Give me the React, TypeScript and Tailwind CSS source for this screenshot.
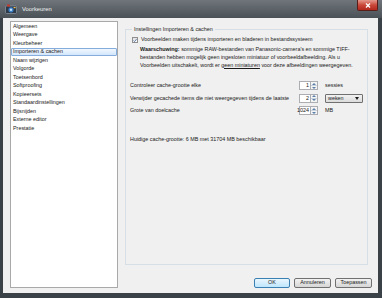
import * as React from "react"

const items = [
  "Algemeen",
  "Weergave",
  "Kleurbeheer",
  "Importeren & cachen",
  "Naam wijzigen",
  "Volgorde",
  "Toetsenbord",
  "Softproofing",
  "Kopieersets",
  "Standaardinstellingen",
  "Bijsnijden",
  "Externe editor",
  "Prestatie",
]

function Spin({ value }: { value: string }) {
  return (
    <div className="flex h-[9px] w-[19px]">
      <div className="flex w-[12px] items-center justify-end border border-[#abadb3] bg-white pr-[1px] leading-none">
        {value}
      </div>
      <div className="flex w-[7px] flex-col border border-l-0 border-[#abadb3] bg-[#f4f4f4]">
        <div className="flex flex-1 items-center justify-center border-b border-[#c9d3dd]">
          <svg width="4" height="2" viewBox="0 0 4 2">
            <path d="M0 2 L2 0 L4 2 Z" fill="#5b7fa8" />
          </svg>
        </div>
        <div className="flex flex-1 items-center justify-center">
          <svg width="4" height="2" viewBox="0 0 4 2">
            <path d="M0 0 L2 2 L4 0 Z" fill="#5b7fa8" />
          </svg>
        </div>
      </div>
    </div>
  )
}

function Btn({ label, primary }: { label: string; primary?: boolean }) {
  return (
    <div
      className={
        primary
          ? "flex h-[10px] w-[36px] items-center justify-center rounded-[2px] border border-[#3c7fb1] bg-linear-to-b from-[#eaf6fd] to-[#bee6fd] leading-none"
          : "flex h-[10px] w-[37px] items-center justify-center rounded-[2px] border border-[#707070] bg-linear-to-b from-[#f2f2f2] to-[#d6d6d6] leading-none"
      }
    >
      {label}
    </div>
  )
}

export default function App() {
  return (
    <div className="flex h-[298px] w-[382px] flex-col bg-[#3a4147] font-['Liberation_Sans',Arial,sans-serif] text-[5.4px] text-[#1a1a1a]">
      {/* title bar */}
      <div className="flex h-[18px] items-center bg-linear-to-b from-[#6f757b] to-[#4a5157] pl-[5px] pr-[4px]">
        <svg width="12" height="10" viewBox="0 0 12 10">
          <rect x="0.5" y="2" width="11" height="7.5" rx="1" fill="#2d3a4a" stroke="#9aa4ae" strokeWidth="0.6" />
          <rect x="2" y="0.5" width="3" height="2" fill="#c43b2c" />
          <circle cx="6" cy="5.8" r="2.6" fill="#3e7fc4" />
          <circle cx="6" cy="5.8" r="1.2" fill="#bfe0ff" />
          <rect x="8.6" y="3" width="2" height="1.2" fill="#f2c14e" />
        </svg>
        <span className="ml-[5px] text-[5.8px] text-[#f2f2f2]">Voorkeuren</span>
        <div className="ml-auto flex h-[11px] w-[21px] self-start items-center justify-center rounded-b-[2px] border border-t-0 border-[#5a1e1a] bg-linear-to-b from-[#e2988c] via-[#c9473a] to-[#b3261a]">
          <svg width="6" height="5" viewBox="0 0 6 5">
            <path d="M1 0.5 L5 4.5 M5 0.5 L1 4.5" stroke="#fff" strokeWidth="1.3" />
          </svg>
        </div>
      </div>

      {/* body */}
      <div className="mb-[5px] ml-[3px] mr-[4px] flex flex-1 bg-[#f0f0f0]">
        {/* category list */}
        <div className="ml-[7px] mt-[3px] flex h-[267px] w-[110px] flex-col border border-[#a9a9a9] bg-white">
          {items.map((item) => (
            <div
              key={item}
              className={
                item === "Importeren & cachen"
                  ? "flex h-[8.5px] items-center rounded-[1px] border border-[#84acdd] bg-linear-to-b from-[#f1f7fe] to-[#d3e6fb] pl-[1px] leading-none"
                  : "flex h-[8.5px] items-center pl-[2px] leading-none"
              }
            >
              {item}
            </div>
          ))}
        </div>

        {/* settings */}
        <div className="flex flex-1 flex-col pl-[7px] pr-[10px]">
          <fieldset className="mt-[7px] flex h-[240px] flex-col border border-[#d5dfe5] pl-[4px] pr-[4px]">
            <legend className="ml-[2px] px-[2px] leading-[8px]">Instellingen Importeren &amp; cachen</legend>

            <div className="mt-[4px] flex items-center leading-none">
              <div className="ml-[2px] flex h-[6px] w-[6px] items-center justify-center border border-[#8f8f8f] bg-linear-to-b from-[#e0e0e0] to-[#ffffff]">
                <svg width="5" height="5" viewBox="0 0 5 5">
                  <path d="M0.6 2.6 L1.9 3.9 L4.4 0.8" fill="none" stroke="#2a4f8a" strokeWidth="0.9" />
                </svg>
              </div>
              <span className="ml-[3px]">Voorbeelden maken tijdens importeren en bladeren in bestandssysteem</span>
            </div>

            <div className="mt-[3px] pl-[10px] leading-[7.8px]">
              <div>
                <b>Waarschuwing:</b> sommige RAW-bestanden van Panasonic-camera's en sommige TIFF-
              </div>
              <div>bestanden hebben mogelijk geen ingesloten miniatuur of voorbeeldafbeelding. Als u</div>
              <div>
                Voorbeelden uitschakelt, wordt er <span className="underline">geen miniaturen</span> voor deze afbeeldingen weergegeven.
              </div>
            </div>

            <div className="mt-[12px] flex flex-col gap-[3.5px] leading-none">
              <div className="flex h-[9px] items-center">
                <span className="w-[169px]">Controleer cache-grootte elke</span>
                <Spin value="1" />
                <span className="ml-[7px]">sessies</span>
              </div>
              <div className="flex h-[9px] items-center">
                <span className="w-[169px]">Verwijder gecachede items die niet weergegeven tijdens de laatste</span>
                <Spin value="2" />
                <div className="ml-[7px] flex h-[9px] w-[38px] items-center justify-between rounded-[1px] border border-[#707070] bg-linear-to-b from-[#f2f2f2] to-[#dcdcdc] pl-[2px] pr-[3px]">
                  <span>weken</span>
                  <svg width="4" height="3" viewBox="0 0 4 3">
                    <path d="M0 0 L4 0 L2 3 Z" fill="#1a1a1a" />
                  </svg>
                </div>
              </div>
              <div className="flex h-[9px] items-center">
                <span className="w-[169px]">Grote van doelcache</span>
                <Spin value="1024" />
                <span className="ml-[7px]">MB</span>
              </div>
            </div>

            <div className="mt-[22px] leading-none">Huidige cache-grootte: 6 MB met 31704 MB beschikbaar</div>
          </fieldset>

          <div className="-mr-[4px] mt-[13px] flex justify-end gap-[4px]">
            <Btn label="OK" primary />
            <Btn label="Annuleren" />
            <Btn label="Toepassen" />
          </div>
        </div>
      </div>
    </div>
  )
}
